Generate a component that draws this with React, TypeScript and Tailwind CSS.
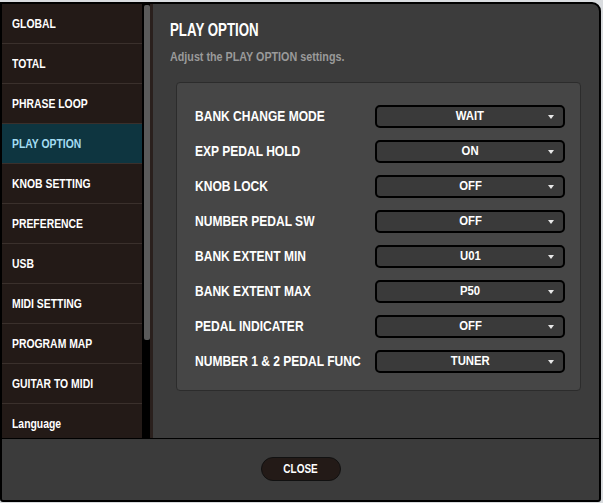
import React from 'react'

const FONT = '"Liberation Sans", Arial, sans-serif'

const menu = [
  'GLOBAL',
  'TOTAL',
  'PHRASE LOOP',
  'PLAY OPTION',
  'KNOB SETTING',
  'PREFERENCE',
  'USB',
  'MIDI SETTING',
  'PROGRAM MAP',
  'GUITAR TO MIDI',
  'Language',
]

const options: [string, string][] = [
  ['BANK CHANGE MODE', 'WAIT'],
  ['EXP PEDAL HOLD', 'ON'],
  ['KNOB LOCK', 'OFF'],
  ['NUMBER PEDAL SW', 'OFF'],
  ['BANK EXTENT MIN', 'U01'],
  ['BANK EXTENT MAX', 'P50'],
  ['PEDAL INDICATER', 'OFF'],
  ['NUMBER 1 & 2 PEDAL FUNC', 'TUNER'],
]

function Select({ value }: { value: string }) {
  return (
    <div className="relative shrink-0 w-[190px] h-[23px] rounded-[5px] border-2 border-black bg-[#3a3a3a] flex items-center justify-center">
      <span className="inline-block scale-x-[0.84] text-white text-[13.5px] font-bold">{value}</span>
      <svg className="absolute right-[9px] top-[8px]" width="6" height="4" viewBox="0 0 6 4">
        <path d="M0 0 L6 0 L3 4 Z" fill="#e8e8e8" />
      </svg>
    </div>
  )
}

export default function App() {
  return (
    <div className="w-[603px] h-[503px] bg-[#d9dcdf] pt-[2px]" style={{ fontFamily: FONT }}>
      <div className="w-[601px] h-[500px] bg-black border-2 border-black rounded-tr-[9px] rounded-b-[3px] flex flex-col overflow-hidden">
        <div className="flex h-[434px]">
          {/* sidebar */}
          <div className="w-[140px] shrink-0 bg-[#231a17] flex flex-col">
            {menu.map((m, i) => (
              <div
                key={m}
                className={`h-[40px] shrink-0 flex items-center pl-[10px] pt-[1px] border-b border-[#3a302c] ${
                  m === 'PLAY OPTION' ? 'bg-[#0e3540] text-[#a3dcf2]' : 'text-white'
                } ${i === menu.length - 1 ? 'border-b-0' : ''}`}
              >
                <span className="inline-block origin-left scale-x-[0.77] whitespace-nowrap text-[13.5px] font-bold">{m}</span>
              </div>
            ))}
          </div>
          {/* scrollbar */}
          <div className="w-[8px] shrink-0 bg-black pt-[1px] pl-[2px]">
            <div className="w-[6px] h-[335px] bg-[#5a5a5a] rounded-[2px]" />
          </div>
          <div className="w-[3px] shrink-0 bg-[#2a201d]" />
          {/* main */}
          <div className="flex-1 min-w-0 bg-[#3c3c3c] pl-[17px] pr-[18px] pt-[18px]">
            <h1 className="text-white text-[17.5px] font-bold leading-none">
              <span className="inline-block origin-left scale-x-[0.76] whitespace-nowrap">PLAY OPTION</span>
            </h1>
            <p className="text-[#9a9a9a] text-[12.5px] font-bold mt-[11px] leading-none">
              <span className="inline-block origin-left scale-x-[0.86] whitespace-nowrap">Adjust the PLAY OPTION settings.</span>
            </p>
            <div className="mt-[19px] ml-[6px] bg-[#464646] border border-[#2c2c2c] rounded-[4px] pt-[16px] pb-[11px] pl-[18px] pr-[15px]">
              {options.map(([label, value]) => (
                <div key={label} className="h-[35px] flex items-center gap-2">
                  <span className="flex-1 min-w-0 whitespace-nowrap text-white text-[14px] font-bold">
                    <span className="inline-block origin-left scale-x-[0.86]">{label}</span>
                  </span>
                  <Select value={value} />
                </div>
              ))}
            </div>
          </div>
        </div>
        {/* footer */}
        <div className="flex-1 mt-[1px] bg-[#3b3b3b] flex justify-center pt-[18px]">
          <button className="w-[80px] h-[24px] rounded-full bg-[#231a17] border border-[#111] text-white text-[12.5px] font-bold">
            <span className="inline-block scale-x-[0.8]">CLOSE</span>
          </button>
        </div>
      </div>
    </div>
  )
}
